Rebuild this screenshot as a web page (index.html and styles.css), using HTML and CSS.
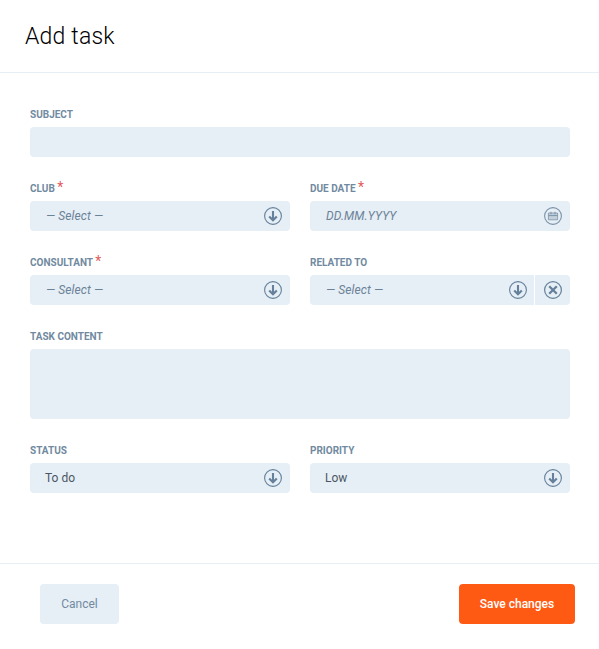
FILE: index.html
```html
<!DOCTYPE html>
<html lang="en">
<head>
    <meta charset="UTF-8">
    <meta name="viewport" content="width=device-width, initial-scale=1.0">
    <title>Add task</title>
    <link rel="stylesheet" href="styles.css">
</head>
<body>
    <svg class="sprites" width="0" height="0" aria-hidden="true">
        <symbol id="icon-down" viewBox="0 0 18 18">
            <circle cx="9" cy="9" r="8.4" fill="none" stroke="currentColor" stroke-width="1.1"/>
            <path d="M9 4v9.2M5.2 9.4 9 13.2l3.8-3.8" fill="none" stroke="currentColor" stroke-width="2.1"/>
        </symbol>
        <symbol id="icon-clear" viewBox="0 0 18 18">
            <circle cx="9" cy="9" r="8.4" fill="none" stroke="currentColor" stroke-width="1.2"/>
            <path d="M5.2 5.2l7.6 7.6M12.8 5.2l-7.6 7.6" fill="none" stroke="currentColor" stroke-width="2.3"/>
        </symbol>
        <symbol id="icon-date" viewBox="0 0 18 18">
            <circle cx="9" cy="9" r="8.4" fill="none" stroke="currentColor" stroke-width="1.1"/>
            <path d="M4.4 6h9.2v6.8H4.4z" fill="#c3d0dc" stroke="currentColor" stroke-width=".8"/>
            <path d="M4.4 8.6h9.2M7 4.8v2.6M11 4.8v2.6" fill="none" stroke="currentColor" stroke-width="1"/>
        </symbol>
    </svg>

    <div class="modal">
        <div class="header">
            <h1>Add task</h1>
        </div>

        <form class="form">
            <div class="field wide">
                <label>Subject</label>
                <div class="input"></div>
            </div>

            <div class="field">
                <label>Club <span class="req">*</span></label>
                <div class="input select">
                    <span class="placeholder">— Select —</span>
                    <svg class="icon"><use href="#icon-down"/></svg>
                </div>
            </div>
            <div class="field">
                <label>Due date <span class="req">*</span></label>
                <div class="input select">
                    <span class="placeholder">DD.MM.YYYY</span>
                    <svg class="icon icon-date"><use href="#icon-date"/></svg>
                </div>
            </div>

            <div class="field">
                <label>Consultant <span class="req">*</span></label>
                <div class="input select">
                    <span class="placeholder">— Select —</span>
                    <svg class="icon"><use href="#icon-down"/></svg>
                </div>
            </div>
            <div class="field">
                <label>Related to</label>
                <div class="input select has-clear">
                    <span class="placeholder">— Select —</span>
                    <svg class="icon"><use href="#icon-down"/></svg>
                    <span class="clear"><svg class="icon"><use href="#icon-clear"/></svg></span>
                </div>
            </div>

            <div class="field wide">
                <label>Task content</label>
                <div class="input textarea"></div>
            </div>

            <div class="field">
                <label>Status</label>
                <div class="input select">
                    <span class="value">To do</span>
                    <svg class="icon"><use href="#icon-down"/></svg>
                </div>
            </div>
            <div class="field">
                <label>Priority</label>
                <div class="input select">
                    <span class="value">Low</span>
                    <svg class="icon"><use href="#icon-down"/></svg>
                </div>
            </div>
        </form>

        <div class="footer">
            <button class="btn btn-cancel" type="button">Cancel</button>
            <button class="btn btn-save" type="button">Save changes</button>
        </div>
    </div>
</body>
</html>
```

FILE: styles.css
```css
*{
    margin: 0;
    padding: 0;
    box-sizing: border-box;
}
body{
    background-color: #fff;
    font-family: Roboto, "Liberation Sans", sans-serif;
    overflow: hidden;
}
.sprites{
    position: absolute;
}
.modal{
    width: 599px;
    height: 649px;
}
.header{
    height: 73px;
    padding: 22px 25px 0;
    border-bottom: 1px solid #e6eff5;
}
.header h1{
    font-size: 23px;
    line-height: 28px;
    font-weight: 300;
    letter-spacing: .2px;
    color: #000;
    padding-top: 1px;
}
.form{
    height: 490px;
    padding: 35px 29px 0 30px;
    display: grid;
    grid-template-columns: 260px 260px;
    column-gap: 20px;
    row-gap: 25px;
    align-content: start;
}
.field.wide{
    grid-column: 1 / 3;
}
.field label{
    display: block;
    height: 19px;
    font-size: 10px;
    line-height: 14px;
    font-weight: 700;
    text-transform: uppercase;
    color: #718a9f;
}
.req{
    color: #e25c5c;
    font-size: 14px;
    line-height: 10px;
    font-weight: 400;
}
.input{
    height: 30px;
    background-color: #e6eef6;
    border-radius: 4px;
}
.textarea{
    height: 70px;
}
.select{
    display: flex;
    align-items: center;
    padding: 0 8px 0 15px;
    font-size: 12px;
}
.placeholder{
    flex: 1;
    font-style: italic;
    color: #6b8297;
    letter-spacing: .1px;
    margin-left: 1px;
}
.value{
    flex: 1;
    color: #4a5763;
}
.icon{
    width: 18px;
    height: 18px;
    color: #64809a;
    display: block;
}
.icon-date{
    color: #7b93a8;
}
.has-clear{
    padding-right: 0;
}
.has-clear > .icon{
    margin-right: 7px;
}
.clear{
    width: 36px;
    height: 30px;
    border-left: 1px solid #fff;
    display: flex;
    align-items: center;
    justify-content: center;
}
.footer{
    height: 86px;
    border-top: 1px solid #e6eff5;
    padding: 20px 24px 0 40px;
    display: flex;
    justify-content: space-between;
    align-items: flex-start;
}
.btn{
    height: 40px;
    border: none;
    border-radius: 4px;
    font-family: inherit;
    font-size: 12px;
}
.btn-cancel{
    width: 79px;
    background-color: #e6eef6;
    color: #718a9f;
}
.btn-save{
    width: 116px;
    background-color: #ff5a14;
    color: #fff;
    font-weight: 500;
}
```
